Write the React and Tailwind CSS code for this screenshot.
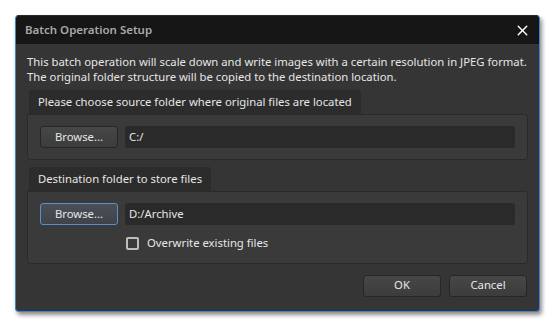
import { X } from 'lucide-react';

function Button({ children, focused }) {
  return (
    <button
      className={`h-[22px] w-[78px] rounded-[3px] border text-[11.3px] text-[#e6e6e6] ${
        focused
          ? 'border-[#5a8fc8] bg-gradient-to-b from-[#4a4f57] to-[#3f4349]'
          : 'border-[#262626] bg-gradient-to-b from-[#474747] to-[#3c3c3c]'
      }`}
    >
      {children}
    </button>
  );
}

function PathInput({ value }) {
  return (
    <div className="flex h-[22px] flex-1 items-center rounded-[3px] bg-[#2a2a2a] pl-[4px] text-[11.3px] text-[#e6e6e6]">
      {value}
    </div>
  );
}

function Group({ title, children }) {
  return (
    <div className="flex flex-col">
      <div className="ml-[2px] flex h-[24px] items-center self-start rounded-t-[3px] bg-[#2c2c2c] px-[9px] text-[11.3px] text-[#e6e6e6]">
        {title}
      </div>
      <div className="rounded-[3px] rounded-tl-none border border-[#2a2a2a] bg-[#3a3a3a] px-[12px] pt-[11px] pb-[11px]">
        {children}
      </div>
    </div>
  );
}

export default function App() {
  return (
    <div className="h-[326px] w-[554px] bg-white pl-[15px] pt-[15px] font-['Noto_Sans',sans-serif]">
      <div className="flex h-[297px] w-[525px] flex-col overflow-hidden rounded-[4px] border border-[#3c86d0] border-t-[#2a2a2a] bg-[#353535] shadow-[2px_3px_4px_rgba(0,0,0,0.45)]">
        <div className="flex h-[28px] shrink-0 items-center justify-between bg-[#161616] pl-[9px] pr-[8px]">
          <span className="text-[11.5px] font-semibold text-[#a8a8a8]">Batch Operation Setup</span>
          <X size={17} strokeWidth={2} className="text-white" />
        </div>
        <div className="flex flex-1 flex-col px-[11px] pt-[10px]">
          <p className="text-[11.3px] leading-[15px] text-[#e6e6e6]">
            This batch operation will scale down and write images with a certain resolution in JPEG format.
            <br />
            The original folder structure will be copied to the destination location.
          </p>
          <div className="mt-[6px] flex flex-col gap-[7px]">
            <Group title="Please choose source folder where original files are located">
              <div className="flex gap-[7px]">
                <Button>Browse...</Button>
                <PathInput value="C:/" />
              </div>
            </Group>
            <Group title="Destination folder to store files">
              <div className="flex gap-[7px]">
                <Button focused>Browse...</Button>
                <PathInput value="D:/Archive" />
              </div>
              <label className="ml-[86px] mt-[10px] flex items-center gap-[8px] text-[11.3px] text-[#e6e6e6]">
                <span className="h-[13px] w-[13px] rounded-[2px] border-2 border-[#bdbdbd]" />
                Overwrite existing files
              </label>
            </Group>
          </div>
          <div className="mt-[11px] flex justify-end gap-[8px] pr-[1px]">
            <Button>OK</Button>
            <Button>Cancel</Button>
          </div>
        </div>
      </div>
    </div>
  );
}
